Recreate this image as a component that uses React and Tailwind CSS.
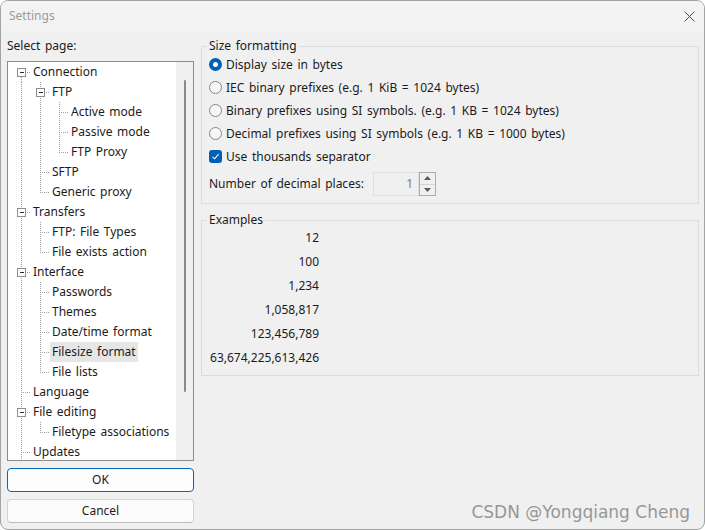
import React from "react";

const tree = [
  { label: "Connection", cols: "F", box: true },
  { label: "FTP", cols: "IT", box: true },
  { label: "Active mode", cols: "IIT" },
  { label: "Passive mode", cols: "IIT" },
  { label: "FTP Proxy", cols: "IIL" },
  { label: "SFTP", cols: "IT" },
  { label: "Generic proxy", cols: "IL" },
  { label: "Transfers", cols: "T", box: true },
  { label: "FTP: File Types", cols: "IT" },
  { label: "File exists action", cols: "IL" },
  { label: "Interface", cols: "T", box: true },
  { label: "Passwords", cols: "IT" },
  { label: "Themes", cols: "IT" },
  { label: "Date/time format", cols: "IT" },
  { label: "Filesize format", cols: "IT", selected: true },
  { label: "File lists", cols: "IL" },
  { label: "Language", cols: "T" },
  { label: "File editing", cols: "T", box: true },
  { label: "Filetype associations", cols: "IL" },
  { label: "Updates", cols: "T" },
];

const radios = [
  { label: "Display size in bytes", checked: true },
  { label: "IEC binary prefixes (e.g. 1 KiB = 1024 bytes)" },
  { label: "Binary prefixes using SI symbols. (e.g. 1 KB = 1024 bytes)" },
  { label: "Decimal prefixes using SI symbols (e.g. 1 KB = 1000 bytes)" },
];

const examples = ["12", "100", "1,234", "1,058,817", "123,456,789", "63,674,225,613,426"];

// one indent column of the tree: dotted connector lines + optional expander box
const TreeCell = ({ kind, box }) => {
  const dot = { stroke: "#a0a0a0", strokeDasharray: "1 1", shapeRendering: "crispEdges" };
  return (
    <svg width="19" height="20" className="block shrink-0">
      {(kind === "I" || kind === "T") && <line x1="9.5" y1="0" x2="9.5" y2="20" {...dot} />}
      {kind === "L" && <line x1="9.5" y1="0" x2="9.5" y2="10.5" {...dot} />}
      {kind === "F" && <line x1="9.5" y1="10.5" x2="9.5" y2="20" {...dot} />}
      {kind !== "I" && <line x1="10.5" y1="10.5" x2="19" y2="10.5" {...dot} />}
      {box && (
        <g shapeRendering="crispEdges">
          <rect x="5.5" y="6.5" width="8" height="8" fill="#ffffff" stroke="#8c8c8c" />
          <line x1="7.5" y1="10.5" x2="12" y2="10.5" stroke="#2b2b2b" />
        </g>
      )}
    </svg>
  );
};

const TreeRow = ({ item }) => {
  const cols = item.cols.split("");
  return (
    <div className="flex h-5 items-center">
      {cols.map((kind, i) => (
        <TreeCell key={i} kind={kind} box={item.box && i === cols.length - 1} />
      ))}
      <span
        className={`whitespace-nowrap px-[2px] leading-5 ${item.selected ? "bg-[#e6e6e6]" : ""}`}
      >
        {item.label}
      </span>
    </div>
  );
};

const Radio = ({ checked }) =>
  checked ? (
    <span className="flex h-[13px] w-[13px] shrink-0 items-center justify-center rounded-full bg-[#005fb8]">
      <span className="h-[5px] w-[5px] rounded-full bg-white" />
    </span>
  ) : (
    <span className="h-[13px] w-[13px] shrink-0 rounded-full border border-[#858585] bg-[#f7f7f7]" />
  );

const Checkbox = () => (
  <span className="flex h-[13px] w-[13px] shrink-0 items-center justify-center rounded-[3px] bg-[#005fb8]">
    <svg width="9" height="9" viewBox="0 0 9 9">
      <path d="M1.5 4.8 L3.6 6.8 L7.6 2.2" fill="none" stroke="#ffffff" strokeWidth="1.1" />
    </svg>
  </span>
);

const SpinBox = () => (
  <div className="flex h-6">
    <div className="flex w-[46px] items-center justify-end border border-[#dedede] bg-[#f0f0f0] pr-[5px] text-[#7a7a7a]">
      1
    </div>
    <div className="flex w-[17px] flex-col border border-[#acacac] bg-[#f0f0f0]">
      <div className="flex flex-1 items-center justify-center border-b border-[#d6d6d6]">
        <svg width="7" height="4" viewBox="0 0 7 4">
          <path d="M0 4 L3.5 0 L7 4 Z" fill="#5a5a5a" />
        </svg>
      </div>
      <div className="flex flex-1 items-center justify-center">
        <svg width="7" height="4" viewBox="0 0 7 4">
          <path d="M0 0 L3.5 4 L7 0 Z" fill="#5a5a5a" />
        </svg>
      </div>
    </div>
  </div>
);

export default function App() {
  return (
    <div className="relative flex h-[530px] w-[705px] flex-col overflow-hidden rounded-[8px] border border-[#a3a3a3] bg-[#f0f0f0] font-['Noto_Sans','Segoe_UI',sans-serif] text-[12px] text-[#1b1b1b] [word-spacing:1.5px]">
      <div className="flex h-[30px] shrink-0 items-center justify-between bg-[#f3f3f3] pl-[8px] pr-[9px]">
        <span className="text-[#9b9b9b]">Settings</span>
        <svg width="11" height="11" viewBox="0 0 11 11">
          <path d="M0.5 0.5 L10.5 10.5 M10.5 0.5 L0.5 10.5" stroke="#4a4a4a" strokeWidth="1" />
        </svg>
      </div>

      <div className="flex gap-[7px] pl-[6px]">
        <div className="flex w-[187px] flex-col">
          <div className="flex h-[30px] items-center">Select page:</div>
          <div className="flex h-[400px] border border-[#8c8c8c] bg-white">
            <div className="flex-1 overflow-hidden pl-[4px]">
              {tree.map((item) => (
                <TreeRow key={item.label} item={item} />
              ))}
            </div>
            <div className="flex w-[17px] justify-center bg-[#f0f0f0] pt-[18px]">
              <div className="h-[312px] w-[2px] rounded-full bg-[#8a8a8a]" />
            </div>
          </div>
          <button className="mt-[7px] h-6 rounded-[4px] border border-[#0067c0] bg-[#fdfdfd]">OK</button>
          <button className="mt-[7px] h-6 rounded-[4px] border border-[#d3d3d3] border-b-[#bcbcbc] bg-[#fbfbfb]">
            Cancel
          </button>
        </div>

        <div className="flex w-[498px] flex-col">
          <fieldset className="mt-[7px] border border-[#dcdcdc] p-0">
            <legend className="ml-[5px] px-[2px] leading-4">Size formatting</legend>
            <div className="-mt-px pb-[7px] pl-[7px]">
              {radios.map((r) => (
                <div key={r.label} className="flex h-[23px] items-center gap-[4px]">
                  <Radio checked={r.checked} />
                  <span className="whitespace-nowrap">{r.label}</span>
                </div>
              ))}
              <div className="flex h-[23px] items-center gap-[4px]">
                <Checkbox />
                <span>Use thousands separator</span>
              </div>
              <div className="mt-[4px] flex h-6 items-center">
                <span className="w-[164px]">Number of decimal places:</span>
                <SpinBox />
              </div>
            </div>
          </fieldset>

          <fieldset className="mt-[8px] border border-[#dcdcdc] p-0">
            <legend className="ml-[5px] px-[2px] leading-4">Examples</legend>
            <div className="-mt-[2px] pb-[5px] pl-[7px]">
              {examples.map((n) => (
                <div key={n} className="flex h-6 w-[110px] items-center justify-end">
                  {n}
                </div>
              ))}
            </div>
          </fieldset>
        </div>
      </div>

      <span className="absolute bottom-[4px] right-[14px] font-['DejaVu_Sans',sans-serif] text-[17px] text-[#979797] [word-spacing:0px]">
        CSDN @Yongqiang Cheng
      </span>
    </div>
  );
}
